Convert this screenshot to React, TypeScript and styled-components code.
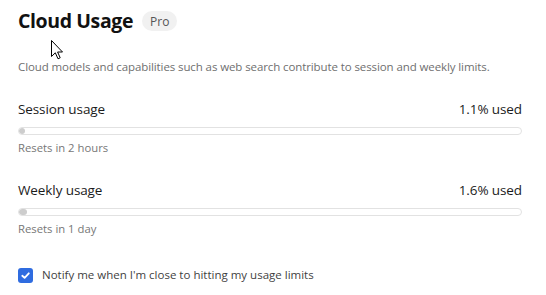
import React from "react";
import styled, { createGlobalStyle } from "styled-components";

const GlobalStyle = createGlobalStyle`
  html, body { margin: 0; padding: 0; background: #ffffff; }
  body { font-family: "Open Sans", "Noto Sans", sans-serif; }
  * { box-sizing: border-box; }
`;

const Page = styled.div`
  position: relative;
  width: 546px;
  height: 295px;
  padding: 7px 24px 0 18px;
  background: #fff;
  overflow: hidden;
`;

const Header = styled.div`
  display: flex;
  align-items: center;
  gap: 9px;
  height: 28px;
`;

const Title = styled.h1`
  margin: 0;
  font-size: 19.5px;
  line-height: 28px;
  font-weight: 700;
  color: #111;
  letter-spacing: -0.4px;
`;

const Badge = styled.span`
  display: inline-flex;
  align-items: center;
  justify-content: center;
  height: 20px;
  padding: 0 8px;
  border-radius: 10px;
  background: #f1f1f1;
  color: #555;
  font-size: 12px;
`;

const Description = styled.p`
  margin: 24px 0 0;
  font-size: 11.5px;
  line-height: 16px;
  letter-spacing: -0.1px;
  color: #6f6f6f;
`;

const Sections = styled.div`
  display: flex;
  flex-direction: column;
  gap: 24px;
  margin-top: 24px;
`;

const Section = styled.div`
  display: flex;
  flex-direction: column;
`;

const Row = styled.div`
  display: flex;
  justify-content: space-between;
  font-size: 13.5px;
  line-height: 20px;
  letter-spacing: -0.1px;
  color: #1b1b1b;
`;

const Track = styled.div`
  margin-top: 8px;
  height: 8px;
  border: 1px solid #e2e2e2;
  border-radius: 4px;
  overflow: hidden;
`;

const Fill = styled.div`
  height: 100%;
  min-width: 6px;
  border-radius: 3px;
  background: #cdcdcd;
`;

const Note = styled.div`
  margin-top: 5px;
  font-size: 11.3px;
  line-height: 16px;
  color: #777;
`;

const CheckRow = styled.label`
  display: flex;
  align-items: center;
  gap: 9px;
  margin-top: 30px;
  font-size: 11.5px;
  line-height: 16px;
  color: #3f3f3f;
`;

const Box = styled.span`
  display: inline-flex;
  align-items: center;
  justify-content: center;
  width: 15px;
  height: 15px;
  border-radius: 3px;
  background: #2f6ce0;
`;

const Cursor = styled.svg`
  position: absolute;
  left: 51px;
  top: 40px;
`;

const usages = [
  { label: "Session usage", pct: 1.1, note: "Resets in 2 hours" },
  { label: "Weekly usage", pct: 1.6, note: "Resets in 1 day" },
];

export default function App() {
  return (
    <>
      <GlobalStyle />
      <Page>
        <Header>
          <Title>Cloud Usage</Title>
          <Badge>Pro</Badge>
        </Header>
        <Description>
          Cloud models and capabilities such as web search contribute to session and weekly limits.
        </Description>
        <Sections>
          {usages.map((u) => (
            <Section key={u.label}>
              <Row>
                <span>{u.label}</span>
                <span>{u.pct}% used</span>
              </Row>
              <Track>
                <Fill style={{ width: `${u.pct}%` }} />
              </Track>
              <Note>{u.note}</Note>
            </Section>
          ))}
        </Sections>
        <CheckRow>
          <Box>
            <svg width="11" height="11" viewBox="0 0 12 12">
              <path d="M2.5 6.3 L5 8.6 L9.6 3.6" fill="none" stroke="#fff" strokeWidth="2" strokeLinecap="round" strokeLinejoin="round" />
            </svg>
          </Box>
          Notify me when I'm close to hitting my usage limits
        </CheckRow>
        <Cursor width="13" height="20" viewBox="0 0 13 20">
          <path d="M0.5 0.5 L0.5 16.5 L4.3 12.8 L7 18.8 L9.2 17.8 L6.6 12 L11.5 12 Z" fill="#fff" stroke="#000" strokeWidth="1" strokeLinejoin="round" />
        </Cursor>
      </Page>
    </>
  );
}
